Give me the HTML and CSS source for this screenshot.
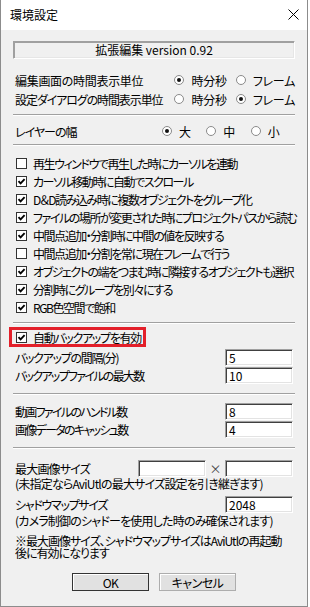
FILE: index.html
```html
<!DOCTYPE html>
<html lang="ja">
<head>
    <meta charset="UTF-8">
    <title>環境設定</title>
    <link rel="stylesheet" href="styles.css">
</head>
<body>
    <div class="ventana">
        <div class="titulo">
            <span>環境設定</span>
            <svg class="cerrar" width="11" height="11" viewBox="0 0 11 11">
                <path d="M0.5 0.5 L10.5 10.5 M10.5 0.5 L0.5 10.5" stroke="#000" stroke-width="1" fill="none"/>
            </svg>
        </div>
        <div class="contenido">
            <div class="version">拡張編集 version 0.92</div>

            <div class="bloque tiempos">
                <div class="fila tiempo">
                    <span class="etiqueta">編集画面の時間表示単位</span>
                    <span class="opcion"><span class="radio on"></span>時分秒</span>
                    <span class="opcion"><span class="radio"></span>フレーム</span>
                </div>
                <div class="fila tiempo">
                    <span class="etiqueta largo">設定ダイアログの時間表示単位</span>
                    <span class="opcion"><span class="radio"></span>時分秒</span>
                    <span class="opcion"><span class="radio on"></span>フレーム</span>
                </div>
            </div>

            <div class="sep s1"></div>

            <div class="fila capa">
                <span class="etiqueta">レイヤーの幅</span>
                <span class="opcion"><span class="radio on"></span>大</span>
                <span class="opcion"><span class="radio"></span>中</span>
                <span class="opcion"><span class="radio"></span>小</span>
            </div>

            <div class="sep s2"></div>

            <div class="bloque casillas">
                <div class="fila casilla"><span class="check"></span>再生ウィンドウで再生した時にカーソルを連動</div>
                <div class="fila casilla"><span class="check on"><svg viewBox="0 0 9 9"><path d="M1.5 4.2 L3.6 6.4 L7.6 2.2" /></svg></span>カーソル移動時に自動でスクロール</div>
                <div class="fila casilla"><span class="check on"><svg viewBox="0 0 9 9"><path d="M1.5 4.2 L3.6 6.4 L7.6 2.2" /></svg></span>D＆D読み込み時に複数オブジェクトをグループ化</div>
                <div class="fila casilla"><span class="check on"><svg viewBox="0 0 9 9"><path d="M1.5 4.2 L3.6 6.4 L7.6 2.2" /></svg></span>ファイルの場所が変更された時にプロジェクトパスから読む</div>
                <div class="fila casilla"><span class="check on"><svg viewBox="0 0 9 9"><path d="M1.5 4.2 L3.6 6.4 L7.6 2.2" /></svg></span>中間点追加・分割時に中間の値を反映する</div>
                <div class="fila casilla"><span class="check"></span>中間点追加・分割を常に現在フレームで行う</div>
                <div class="fila casilla"><span class="check on"><svg viewBox="0 0 9 9"><path d="M1.5 4.2 L3.6 6.4 L7.6 2.2" /></svg></span>オブジェクトの端をつまむ時に隣接するオブジェクトも選択</div>
                <div class="fila casilla"><span class="check on"><svg viewBox="0 0 9 9"><path d="M1.5 4.2 L3.6 6.4 L7.6 2.2" /></svg></span>分割時にグループを別々にする</div>
                <div class="fila casilla"><span class="check on"><svg viewBox="0 0 9 9"><path d="M1.5 4.2 L3.6 6.4 L7.6 2.2" /></svg></span>RGB色空間で飽和</div>
            </div>

            <div class="sep s3"></div>

            <div class="fila resaltada">
                <span class="marco"><span class="check on"><svg viewBox="0 0 9 9"><path d="M1.5 4.2 L3.6 6.4 L7.6 2.2" /></svg></span>自動バックアップを有効</span>
            </div>
            <div class="bloque respaldo">
                <div class="fila campo"><span class="etiqueta">バックアップの間隔(分)</span><span class="caja">5</span></div>
                <div class="fila campo"><span class="etiqueta apretado">バックアップファイルの最大数</span><span class="caja">10</span></div>
            </div>

            <div class="sep s4"></div>

            <div class="bloque manejo">
                <div class="fila campo"><span class="etiqueta apretado">動画ファイルのハンドル数</span><span class="caja">8</span></div>
                <div class="fila campo"><span class="etiqueta apretado">画像データのキャッシュ数</span><span class="caja">4</span></div>
            </div>

            <div class="sep s5"></div>

            <div class="bloque tamanos">
                <div class="fila campo">
                    <span class="etiqueta suelto">最大画像サイズ</span>
                    <span class="par"><span class="caja"></span><span class="por">×</span><span class="caja"></span></span>
                </div>
                <div class="nota">(未指定ならAviUtlの最大サイズ設定を引き継ぎます)</div>
                <div class="fila campo sombra"><span class="etiqueta">シャドウマップサイズ</span><span class="caja">2048</span></div>
                <div class="nota n2">(カメラ制御のシャドーを使用した時のみ確保されます)</div>
                <div class="aviso">
                    <div>※最大画像サイズ、シャドウマップサイズはAviUtlの再起動</div>
                    <div>後に有効になります</div>
                </div>
            </div>

            <div class="botones">
                <button class="boton defecto">OK</button>
                <button class="boton">キャンセル</button>
            </div>
        </div>
    </div>
</body>
</html>
```

FILE: styles.css
```css
body {
    margin: 0;
    background: #fff;
    font-family: "Noto Sans CJK JP", "Noto Sans", sans-serif;
    font-size: 12px;
    font-feature-settings: "palt";
    letter-spacing: -1px;
    color: #000;
}

.ventana {
    width: 308px;
    height: 607px;
    box-sizing: border-box;
    border: 1px solid #8c8c8c;
    border-top: none;
    background: #f0f0f0;
    overflow: hidden;
}

.titulo {
    height: 30px;
    background: #fff;
    display: flex;
    align-items: center;
    justify-content: space-between;
    padding: 0 8px 1px 9px;
    box-sizing: border-box;
    line-height: 1;
    letter-spacing: 0;
}

.cerrar {
    display: block;
    margin-top: -1px;
}

.contenido {
    padding: 11px 12px 0 12px;
}

.version {
    height: 18px;
    box-sizing: border-box;
    border: 1px solid;
    border-color: #a0a0a0 #fff #fff #a0a0a0;
    box-shadow: 1px 1px 0 #a0a0a0 inset, -1px -1px 0 #e6e6e6 inset;
    text-align: center;
    line-height: 16px;
    letter-spacing: 0;
}

.fila {
    height: 18px;
    display: flex;
    align-items: center;
    white-space: nowrap;
}

.etiqueta {
    padding-left: 2px;
}

.tiempos {
    margin-top: 12px;
    display: flex;
    flex-direction: column;
    gap: 1px;
}

.tiempo .etiqueta {
    width: 161px;
    letter-spacing: -0.3px;
}

.tiempo .largo {
    letter-spacing: -1.1px;
}

.tiempo .opcion:nth-child(2) {
    width: 62px;
}

.capa {
    margin-top: 6px;
}

.capa .etiqueta {
    width: 149px;
}

.capa .opcion {
    width: 45px;
}

.opcion {
    display: flex;
    align-items: center;
    letter-spacing: -0.3px;
}

.radio {
    width: 10px;
    height: 10px;
    box-sizing: border-box;
    border: 1px solid #8a8a8a;
    border-radius: 50%;
    background: #fff;
    margin-right: 7px;
    display: flex;
    align-items: center;
    justify-content: center;
}

.radio.on::after {
    content: "";
    width: 4px;
    height: 4px;
    border-radius: 50%;
    background: #111;
}

.sep {
    border-top: 1px solid #a0a0a0;
    border-bottom: 1px solid #fff;
    height: 0;
}

.s1 { margin-top: 6px; }
.s2 { margin-top: 4px; }
.s3 { margin-top: 6px; }
.s4 { margin-top: 9px; }
.s5 { margin-top: 9px; }

.casillas {
    margin-top: 8px;
}

.casilla {
    padding-left: 3px;
    letter-spacing: -1.45px;
}

.check {
    width: 11px;
    height: 11px;
    box-sizing: border-box;
    border: 1px solid #333;
    background: #fff;
    margin-right: 6px;
    flex-shrink: 0;
    display: flex;
    align-items: center;
    justify-content: center;
}

.check svg {
    width: 9px;
    height: 9px;
}

.check path {
    fill: none;
    stroke: #000;
    stroke-width: 1.9;
}

.resaltada {
    margin-top: 4px;
}

.marco {
    display: flex;
    align-items: center;
    height: 20px;
    width: 137px;
    box-sizing: border-box;
    border: 3px solid #e3202a;
    margin-left: -4px;
    padding-left: 4px;
    letter-spacing: -1.3px;
}

.respaldo {
    margin-top: 2px;
}

.manejo {
    margin-top: 7px;
}

.campo {
    justify-content: space-between;
}

.campo .etiqueta {
    letter-spacing: -1.3px;
}

.campo .apretado {
    letter-spacing: -1.7px;
}

.campo .suelto {
    letter-spacing: -0.8px;
}

.caja {
    width: 68px;
    height: 17px;
    box-sizing: border-box;
    margin-right: 2px;
    background: #fff;
    border: 1px solid;
    border-color: #a0a0a0 #fff #fff #a0a0a0;
    box-shadow: 1px 1px 0 #404040 inset, -1px -1px 0 #e3e3e3 inset;
    padding-left: 3px;
    line-height: 15px;
    letter-spacing: 0;
}

.par {
    display: flex;
    align-items: center;
}

.par .caja:first-child {
    margin-right: 0;
}

.por {
    width: 19px;
    text-align: center;
    color: #444;
    letter-spacing: 0;
}

.tamanos {
    margin-top: 10px;
}

.nota {
    height: 14px;
    line-height: 14px;
    padding-left: 2px;
    white-space: nowrap;
    letter-spacing: -0.8px;
}

.sombra {
    margin-top: 4px;
}

.n2 {
    margin-top: 1px;
}

.aviso {
    margin-top: 7px;
    padding-left: 2px;
    white-space: nowrap;
    letter-spacing: -1px;
}

.aviso div {
    height: 12px;
    line-height: 12px;
}

.botones {
    margin-top: 14px;
    display: flex;
    justify-content: center;
    gap: 10px;
}

.boton {
    width: 77px;
    height: 18px;
    padding: 0;
    font-family: inherit;
    font-size: 12px;
    font-feature-settings: "palt";
    letter-spacing: -0.5px;
    color: #000;
    background: #e1e1e1;
    border: 1px solid #adadad;
    box-shadow: 1px 1px 0 #fff inset;
}

.defecto {
    border-color: #333;
}
```
